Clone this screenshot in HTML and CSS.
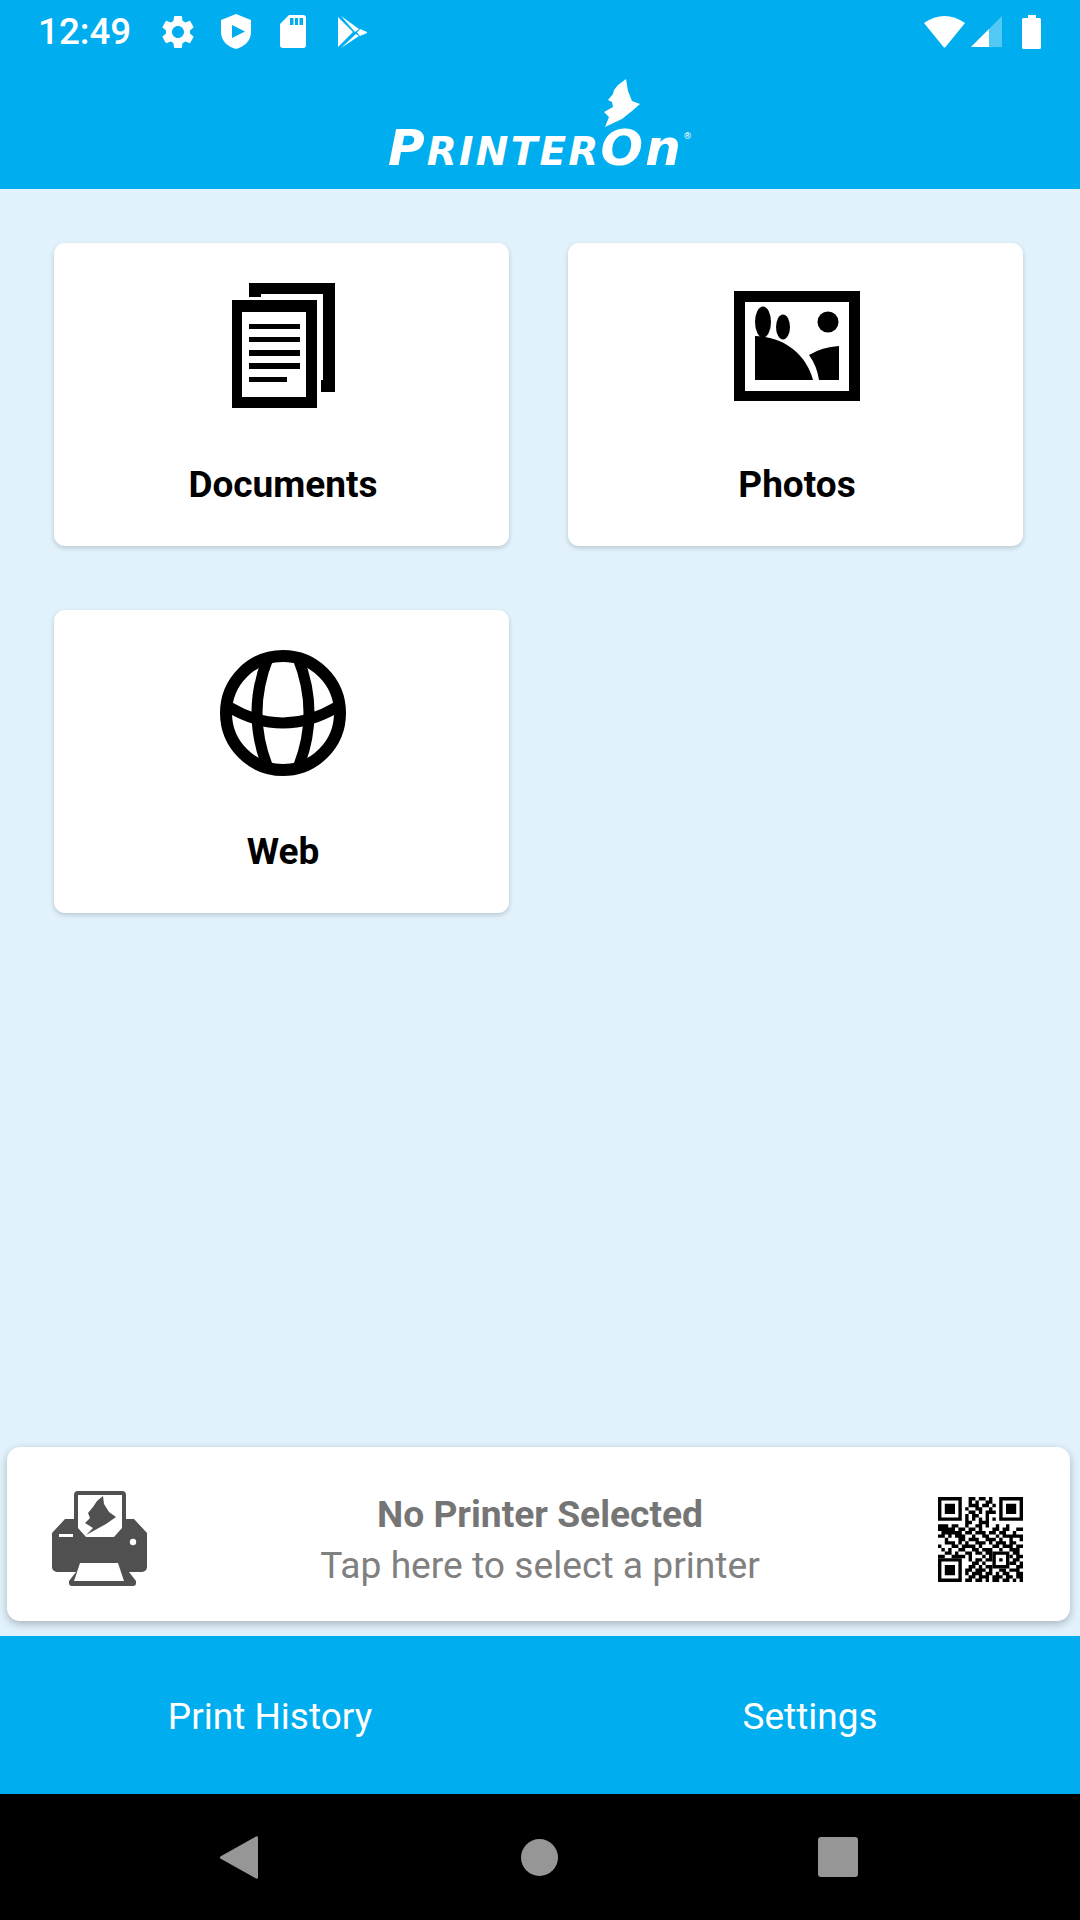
FILE: index.html
```html
<!DOCTYPE html>
<html lang="en">
<head>
    <meta charset="UTF-8">
    <title>PrinterOn</title>
    <link rel="stylesheet" href="styles.css">
</head>
<body>
    <header class="topBar">
        <div class="statusBar">
            <span class="clock">12:49</span>
            <span class="statusIcon">
                <svg width="40" height="40" viewBox="0 0 24 24"><path d="M19.14 12.94c.04-.3.06-.61.06-.94 0-.32-.02-.64-.07-.94l2.03-1.58c.18-.14.23-.41.12-.61l-1.92-3.32c-.12-.22-.37-.29-.59-.22l-2.39.96c-.5-.38-1.03-.7-1.62-.94l-.36-2.54c-.04-.24-.24-.41-.48-.41h-3.84c-.24 0-.43.17-.47.41l-.36 2.54c-.59.24-1.13.57-1.62.94l-2.39-.96c-.22-.08-.47 0-.59.22L2.74 8.87c-.12.21-.08.47.12.61l2.03 1.58c-.05.3-.09.63-.09.94s.02.64.07.94l-2.03 1.58c-.18.14-.23.41-.12.61l1.92 3.32c.12.22.37.29.59.22l2.39-.96c.5.38 1.03.7 1.62.94l.36 2.54c.05.24.24.41.48.41h3.84c.24 0 .44-.17.47-.41l.36-2.54c.59-.24 1.13-.56 1.62-.94l2.39.96c.22.08.47 0 .59-.22l1.92-3.32c.12-.22.07-.47-.12-.61l-2.01-1.58zM12 15.6c-1.98 0-3.6-1.62-3.6-3.6s1.62-3.6 3.6-3.6 3.6 1.62 3.6 3.6-1.62 3.6-3.6 3.6z" fill="#fff"/></svg>
            </span>
            <span class="statusIcon">
                <svg width="30" height="35" viewBox="0 0 30 35"><path fill-rule="evenodd" d="M15 0L30 6V18C30 27 23 33 15 35C7 33 0 27 0 18V6ZM11 11V24L24 17.5Z" fill="#fff"/></svg>
            </span>
            <span class="statusIcon sdIcon">
                <svg width="26" height="33" viewBox="0 0 26 33"><path fill-rule="evenodd" d="M9 0H23a3 3 0 0 1 3 3V30a3 3 0 0 1-3 3H3a3 3 0 0 1-3-3V9ZM10 3V10H13.5V3ZM15 3V10H18V3ZM19.5 3V10H23V3Z" fill="#fff"/></svg>
            </span>
            <span class="statusIcon">
                <svg width="29" height="32" viewBox="0 0 29 32"><path d="M0 1L15 16L0 31ZM3 0L21 13L17 16ZM22 13L29 16V17L22 20L19 16.5ZM3 32L18 18L21 20Z" fill="#fff"/></svg>
            </span>
            <div class="statusRight">
                <svg width="41" height="32" viewBox="0 0 41 32"><path d="M0 7Q20.5-7 41 7L21.5 31a1.3 1.3 0 0 1-2 0Z" fill="#fff"/></svg>
                <svg class="signal" width="31" height="31" viewBox="0 0 31 31"><path d="M0 31L31 0V31Z" fill="#fff" fill-opacity=".32"/><path d="M0 31L18 13V31Z" fill="#fff"/></svg>
                <svg class="battery" width="19" height="34" viewBox="0 0 19 34"><path d="M6 0H14V3H17.500a1.500 1.500 0 0 1 1.500 1.500V32.500a1.500 1.500 0 0 1-1.500 1.500H1.500a1.500 1.500 0 0 1-1.500-1.500V4.500a1.500 1.500 0 0 1 1.500-1.500H6Z" fill="#fff"/></svg>
            </div>
        </div>
        <div class="logo">
            <svg class="logoBird" width="37" height="48" viewBox="0 0 37 48"><path d="M22 0L14 6L10 11L9 15L4 21L8 23L9 28L0 33L5 38L1 48L18 40L28 32L36 25L28 22L24 12Z" fill="#fff"/></svg>
            <div class="wordmark"><span class="big">P</span>RINTER<span class="big">On</span><sup class="reg">®</sup></div>
        </div>
    </header>

    <main class="content">
        <div class="tiles">
            <div class="tile">
                <div class="tileIcon">
                    <svg width="103" height="126" viewBox="0 0 103 126">
                        <path fill-rule="evenodd" d="M0 17H85V125H0ZM10 29V114H74V29Z"/>
                        <path d="M17 0H103V109H89V97H91V11H29V14H17Z"/>
                        <path d="M17 41H68V46H17ZM17 54H68V59H17ZM17 67H68V73H17ZM17 80H68V86H17ZM17 94H55V99H17Z"/>
                    </svg>
                </div>
                <div class="tileName">Documents</div>
            </div>
            <div class="tile">
                <div class="tileIcon">
                    <svg width="126" height="110" viewBox="0 0 126 110">
                        <path fill-rule="evenodd" d="M0 0H126V110H0ZM11 11V100H115V11Z"/>
                        <ellipse cx="29" cy="31" rx="8" ry="15.500"/>
                        <ellipse cx="49" cy="36" rx="7" ry="12.500"/>
                        <circle cx="94" cy="31" r="10.500"/>
                        <path d="M21 45C48 45 72 62 79 89H21Z"/>
                        <path d="M75 64Q88 56 105 55V89H85Q83 75 75 64Z"/>
                    </svg>
                </div>
                <div class="tileName">Photos</div>
            </div>
            <div class="tile">
                <div class="tileIcon">
                    <svg width="126" height="126" viewBox="0 0 126 126" fill="none" stroke="#000" stroke-width="11">
                        <circle cx="63" cy="63" r="57" stroke-width="12"/>
                        <path d="M48 8Q26 63 48 118"/>
                        <path d="M78 8Q100 63 78 118"/>
                        <path d="M9 57Q63 89 117 57"/>
                    </svg>
                </div>
                <div class="tileName">Web</div>
            </div>
        </div>

        <div class="printerCard">
            <svg class="printerIcon" width="96" height="96" viewBox="0 0 96 96" fill="#505050">
                <path d="M26 0H70a4 4 0 0 1 4 4V28H82L95 42V76a5 5 0 0 1-5 5H77L84 90V92a3 3 0 0 1-3 3H20a3 3 0 0 1-3-3V90L24 81H5a5 5 0 0 1-5-5V42L13 28H22V4a4 4 0 0 1 4-4Z"/>
                <path d="M26 4H70V37L62 46H34L26 37ZM7 43H21V46H7ZM28 72H66L72 90H22Z" fill="#fff"/>
                <circle cx="81" cy="51" r="3.200" fill="#fff"/>
                <path d="M51 5L52 13L57 21L64 26L54 33L34 44L41 37L33 32L38 27L36 22L41 16L45 10Z"/>
            </svg>
            <div class="printerText">
                <div class="printerName">No Printer Selected</div>
                <div class="printerHint">Tap here to select a printer</div>
            </div>
            <svg class="qrCode" width="85" height="85" viewBox="0 0 25 25">
                <path fill-rule="evenodd" d="M0 0h7v7h-7zM1 1v5h5v-5zM2 2h3v3h-3zM18 0h7v7h-7zM19 1v5h5v-5zM20 2h3v3h-3zM0 18h7v7h-7zM1 19v5h5v-5zM2 20h3v3h-3zM16 16h5v5h-5zM17 17v3h3v-3zM18 18h1v1h-1z"/>
                <path fill="none" stroke="#000" d="M9 .5h2M12 .5h2M15 .5h1M9 1.500h1M11 1.500h1M14 1.500h2M9 2.500h3M13 2.500h2M16 2.500h1M8 3.500h1M11 3.500h2M15 3.500h1M9 4.500h2M12 4.500h1M14 4.500h3M8 5.500h1M10 5.500h2M14 5.500h1M8 6.500h1M10 6.500h1M12 6.500h1M14 6.500h1M16 6.500h1M8 7.500h2M12 7.500h3M0 8.500h3M4 8.500h2M8 8.500h1M11 8.500h2M14 8.500h1M17 8.500h1M20 8.500h1M0 9.500h5M6 9.500h2M9 9.500h2M12 9.500h1M16 9.500h2M19 9.500h2M23 9.500h2M1 10.500h6M8 10.500h2M11 10.500h3M15 10.500h2M18 10.500h2M22 10.500h1M0 11.500h2M3 11.500h1M5 11.500h3M10 11.500h1M13 11.500h2M17 11.500h1M19 11.500h6M2 12.500h1M6 12.500h2M9 12.500h3M14 12.500h3M18 12.500h1M21 12.500h1M24 12.500h1M2 13.500h3M6 13.500h1M8 13.500h1M11 13.500h3M15 13.500h1M17 13.500h3M21 13.500h2M0 14.500h1M4 14.500h2M7 14.500h4M12 14.500h1M16 14.500h2M19 14.500h3M23 14.500h2M1 15.500h1M3 15.500h1M6 15.500h2M10 15.500h2M13 15.500h3M18 15.500h1M21 15.500h3M2 16.500h2M5 16.500h1M8 16.500h2M11 16.500h2M14 16.500h2M22 16.500h2M0 17.500h2M4 17.500h3M7 17.500h1M9 17.500h1M13 17.500h1M15 17.500h1M21 17.500h1M23 17.500h2M9 18.500h1M11 18.500h2M14 18.500h2M22 18.500h2M10 19.500h2M13 19.500h1M21 19.500h2M24 19.500h1M9 20.500h2M12 20.500h1M14 20.500h2M23 20.500h2M8 21.500h2M11 21.500h3M15 21.500h1M18 21.500h2M21 21.500h3M8 22.500h1M10 22.500h3M14 22.500h2M17 22.500h1M19 22.500h2M23 22.500h2M9 23.500h2M12 23.500h3M16 23.500h3M20 23.500h2M23 23.500h2M8 24.500h2M11 24.500h2M14 24.500h1M16 24.500h2M19 24.500h2M22 24.500h1M24 24.500h1"/>
            </svg>
        </div>
    </main>

    <div class="bottomTabs">
        <div class="tab">Print History</div>
        <div class="tab">Settings</div>
    </div>

    <nav class="navBar">
        <span class="navCell">
            <svg class="navBack" width="38" height="43" viewBox="0 0 38 43"><path d="M36 .4a1.500 1.500 0 0 1 2 1.200V41.400a1.500 1.500 0 0 1-2 1.200L.8 22.800a1.600 1.600 0 0 1 0-2.600Z" fill="#969696"/></svg>
        </span>
        <span class="navCell"><i class="navHome"></i></span>
        <span class="navCell"><i class="navRecent"></i></span>
    </nav>
</body>
</html>
```

FILE: styles.css
```css
* {
    margin: 0;
    padding: 0;
    box-sizing: border-box;
}
body {
    display: flex;
    flex-direction: column;
    width: 1080px;
    height: 1920px;
    background: #e1f2fc;
    font-family: Roboto, "Liberation Sans", sans-serif;
    overflow: hidden;
}
svg {
    display: block;
}

.topBar {
    height: 189px;
    background: #00aeef;
}
.statusBar {
    display: flex;
    align-items: center;
    height: 63px;
    padding-left: 38px;
}
.clock {
    width: 111px;
    color: #fff;
    font-size: 36.75px;
    font-weight: 500;
}
.statusIcon {
    display: flex;
    justify-content: center;
    width: 58px;
}
.sdIcon {
    padding-right: 2px;
}
.statusRight {
    display: flex;
    align-items: center;
    margin-left: auto;
    padding-right: 39px;
}
.statusRight .signal {
    margin-left: 6px;
}
.statusRight .battery {
    margin-left: 20px;
}

.logo {
    display: flex;
    flex-direction: column;
    align-items: flex-end;
    width: 300px;
    margin: 16px auto 0 388px;
}
.logoBird {
    margin-right: 47px;
}
.wordmark {
    width: 300px;
    color: #fff;
    font-family: "DejaVu Sans", sans-serif;
    font-size: 39px;
    font-weight: 700;
    font-style: italic;
    line-height: 42px;
    letter-spacing: 2.2px;
    white-space: nowrap;
}
.wordmark .big {
    font-size: 50px;
}
.wordmark .reg {
    font-size: 9px;
    font-style: normal;
    font-weight: 400;
    letter-spacing: 0;
    vertical-align: 26px;
    line-height: 0;
}

.content {
    flex: 1;
    display: flex;
    flex-direction: column;
}
.tiles {
    display: grid;
    grid-template-columns: 455px 455px;
    grid-auto-rows: 303px;
    column-gap: 59px;
    row-gap: 64px;
    padding: 54px 0 0 54px;
}
.tile {
    display: flex;
    flex-direction: column;
    align-items: center;
    padding: 40px 0 0 3px;
    background: #fff;
    border-radius: 11px;
    box-shadow: 0 2px 5px rgba(0, 0, 0, 0.18);
}
.tileIcon {
    display: flex;
    align-items: center;
    justify-content: center;
    height: 126px;
}
.tileName {
    margin-top: 55px;
    color: #000;
    font-size: 37px;
    font-weight: 700;
    line-height: 42px;
}

.printerCard {
    display: grid;
    grid-template-columns: 1fr auto 1fr;
    align-items: center;
    height: 174px;
    margin: auto 10px 15px 7px;
    padding: 10px 47px 0 45px;
    background: #fff;
    border-radius: 13px;
    box-shadow: 0 3px 8px rgba(0, 0, 0, 0.26);
}
.printerIcon {
    justify-self: start;
}
.printerText {
    margin: 2px 0 0 5px;
    text-align: center;
    font-size: 37.2px;
    line-height: 51px;
}
.printerName {
    color: #757575;
    font-weight: 700;
}
.printerHint {
    color: #808080;
}
.qrCode {
    justify-self: end;
}

.bottomTabs {
    display: flex;
    height: 158px;
    background: #00aeef;
}
.tab {
    flex: 1;
    padding-top: 2px;
    color: #fff;
    font-size: 37px;
    line-height: 158px;
    text-align: center;
}

.navBar {
    display: flex;
    align-items: center;
    justify-content: center;
    height: 126px;
    padding-right: 2px;
    background: #000;
}
.navCell {
    display: flex;
    justify-content: center;
    width: 299px;
}
.navBack {
    margin-right: 3px;
}
.navHome {
    width: 37px;
    height: 37px;
    background: #969696;
    border-radius: 50%;
}
.navRecent {
    width: 40px;
    height: 40px;
    background: #969696;
    border-radius: 3px;
}
```
